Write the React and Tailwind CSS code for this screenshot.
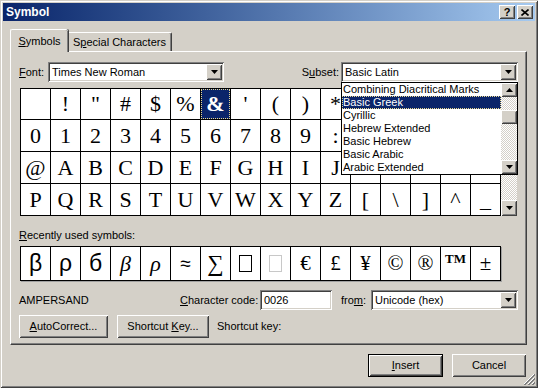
const ui = "font-['Liberation_Sans',Arial,sans-serif] text-[11px] leading-[13px] text-black";
const raised = "shadow-[inset_1px_1px_#ffffff,inset_-1px_-1px_#404040,inset_2px_2px_#d4d0c8,inset_-2px_-2px_#808080]";
const sunken = "shadow-[inset_1px_1px_#808080,inset_-1px_-1px_#ffffff,inset_2px_2px_#404040,inset_-2px_-2px_#d4d0c8]";
const checker = "bg-[repeating-conic-gradient(#ffffff_0_25%,#d4d0c8_0_50%)] bg-[length:2px_2px]";

// cells under the open subset list are left blank, as in the screenshot
const rows = [
  [' ', '!', '"', '#', '$', '%', '&', "'", '(', ')', '*', '', '', '', '', ''],
  ['0', '1', '2', '3', '4', '5', '6', '7', '8', '9', ':', '', '', '', '', ''],
  ['@', 'A', 'B', 'C', 'D', 'E', 'F', 'G', 'H', 'I', 'J', '', '', '', '', ''],
  'PQRSTUVWXYZ[\\]^_'.split(''),
];
const rowH = ['h-[31px]', 'h-[32px]', 'h-[32px]', 'h-[32px]'];

const subsets = [
  'Combining Diacritical Marks',
  'Basic Greek',
  'Cyrillic',
  'Hebrew Extended',
  'Basic Hebrew',
  'Basic Arabic',
  'Arabic Extended',
];

const sans = "font-['Liberation_Sans',Arial,sans-serif]";
const serif = "font-['Liberation_Serif','Times_New_Roman',serif]";

const Tri = ({ up }) => (
  <svg width="7" height="4" viewBox="0 0 7 4" className={up ? 'rotate-180' : ''}>
    <path d="M0 0h7L3.5 4z" fill="#000" />
  </svg>
);

const ArrowBtn = ({ up, className = '' }) => (
  <div className={`w-[16px] bg-[#d4d0c8] flex items-center justify-center ${raised} ${className}`}>
    <Tri up={up} />
  </div>
);

const Combo = ({ value, className = '', children }) => (
  <div className={`relative h-[20px] bg-white flex items-center p-[2px] ${sunken} ${className}`}>
    <span className="flex-1 pl-[2px] whitespace-nowrap">{value}</span>
    <ArrowBtn className="h-[16px]" />
    {children}
  </div>
);

const Button = ({ children, className = '', def }) => (
  <div className={`h-[23px] flex items-center justify-center ${def ? 'border border-black' : ''} ${className}`}>
    <div className={`w-full h-full bg-[#d4d0c8] flex items-center justify-center ${raised}`}>{children}</div>
  </div>
);

const U = ({ children }) => <span className="underline underline-offset-[1px]">{children}</span>;

const Box = ({ gray }) => (
  <div className={`w-[13px] h-[17px] border ${gray ? 'border-[#c8c8c8]' : 'border-black'}`} />
);

const recent = [
  { c: 'β', cls: `${sans} text-[23px]` },
  { c: 'ρ', cls: `${sans} text-[23px]` },
  { c: 'б', cls: `${sans} text-[23px]` },
  { c: 'β', cls: `${serif} italic text-[22px]` },
  { c: 'ρ', cls: `${serif} italic text-[22px]` },
  { c: '≈', cls: `${sans} text-[19px]` },
  { c: '∑', cls: `${serif} text-[23px] font-light` },
  { box: 'black' },
  { box: 'gray' },
  { c: '€', cls: `${serif} text-[21px]` },
  { c: '£', cls: `${serif} text-[21px]` },
  { c: '¥', cls: `${serif} text-[21px]` },
  { c: '©', cls: `${serif} text-[21px]` },
  { c: '®', cls: `${serif} text-[21px]` },
  { c: 'TM', cls: `${serif} font-bold text-[13px] self-start mt-[5px]` },
  { c: '±', cls: `${serif} text-[21px]` },
];

export default function App() {
  return (
    <div className={`relative w-[538px] h-[388px] bg-[#d4d0c8] p-[3px] overflow-hidden shadow-[inset_1px_1px_#d4d0c8,inset_-1px_-1px_#404040,inset_2px_2px_#ffffff,inset_-2px_-2px_#808080] ${ui}`}>
      {/* title bar */}
      <div className="h-[18px] flex items-center bg-gradient-to-r from-[#0a246a] to-[#a6caf0] pl-[3px] pr-[2px]">
        <span className="flex-1 text-white font-bold text-[12px]">Symbol</span>
        <div className="flex gap-[2px]">
          <div className={`w-[16px] h-[14px] bg-[#d4d0c8] flex items-center justify-center font-bold text-[11px] leading-none ${raised}`}>?</div>
          <div className={`w-[16px] h-[14px] bg-[#d4d0c8] flex items-center justify-center ${raised}`}>
            <svg width="8" height="7" viewBox="0 0 8 7">
              <path d="M0.5 0.5l7 6M7.5 0.5l-7 6" stroke="#000" strokeWidth="1.6" />
            </svg>
          </div>
        </div>
      </div>

      <div className="pl-[7px] pr-[8px]">
        {/* tabs */}
        <div className="mt-[8px] flex items-end h-[22px]">
          <div className="relative z-10 -mb-px h-[23px] w-[58px] bg-[#d4d0c8] border-l border-t border-white rounded-tl-[2px] rounded-tr-[2px] shadow-[inset_-1px_0_#808080,1px_0_#404040] flex items-center justify-center">
            <span><U>S</U>ymbols</span>
          </div>
          <div className="h-[19px] w-[104px] border-t border-white border-r border-r-[#404040] shadow-[inset_-1px_0_#808080] rounded-tr-[2px] flex items-center justify-center">
            <span>S<U>p</U>ecial Characters</span>
          </div>
        </div>

        {/* panel */}
        <div className="h-[294px] border-l border-t border-white border-r border-b border-r-[#404040] border-b-[#404040] shadow-[inset_-1px_-1px_#808080] pt-[10px] pl-[8px] pr-[8px]">
          {/* font row */}
          <div className="flex items-center">
            <span className="w-[29px]"><U>F</U>ont:</span>
            <Combo value="Times New Roman" className="w-[176px]" />
            <div className="flex-1" />
            <span className="mr-[2px]">S<U>u</U>bset:</span>
            <Combo value="Basic Latin" className="w-[177px]">
              {/* open list */}
              <div className="absolute left-0 top-full w-[177px] h-[93px] z-20 bg-white border border-black flex">
                <div className="flex-1 flex flex-col">
                  {subsets.map((s) => (
                    <div
                      key={s}
                      className={`h-[13px] pl-[1px] whitespace-nowrap overflow-hidden ${
                        s === 'Basic Greek' ? 'bg-[#0a246a] text-white outline-1 outline-dotted outline-[#e8d890] -outline-offset-1' : ''
                      }`}
                    >
                      {s}
                    </div>
                  ))}
                </div>
                <div className={`w-[16px] flex flex-col ${checker}`}>
                  <ArrowBtn up className="h-[14px]" />
                  <div className="h-[13px]" />
                  <div className={`h-[14px] bg-[#d4d0c8] ${raised}`} />
                  <div className="flex-1" />
                  <ArrowBtn className="h-[14px]" />
                </div>
              </div>
            </Combo>
          </div>

          {/* character grid */}
          <div className="mt-[6px] ml-px flex">
            <div className="border-l border-t border-black">
              {rows.map((r, ri) => (
                <div key={ri} className={`flex ${rowH[ri]}`}>
                  {r.map((ch, ci) => {
                    const sel = ri === 0 && ci === 6;
                    return (
                      <div
                        key={ci}
                        className={`w-[30px] h-full border-r border-b border-black flex items-center justify-center ${serif} text-[22px] leading-none ${
                          sel ? 'bg-[#0a246a] text-white' : 'bg-white'
                        }`}
                      >
                        {sel ? (
                          <div className="w-full h-full outline-1 outline-dotted outline-[#e8d890] -outline-offset-1 flex items-center justify-center font-bold">
                            {ch}
                          </div>
                        ) : (
                          ch
                        )}
                      </div>
                    );
                  })}
                </div>
              ))}
            </div>
            <div className={`w-[16px] flex flex-col ${checker}`}>
              <ArrowBtn up className="h-[16px]" />
              <div className={`h-[16px] bg-[#d4d0c8] ${raised}`} />
              <div className="flex-1" />
              <ArrowBtn className="h-[16px]" />
            </div>
          </div>

          {/* recently used */}
          <div className="mt-[13px]">
            <U>R</U>ecently used symbols:
          </div>
          <div className="mt-[4px] ml-px flex w-fit h-[35px] border-l border-t border-b border-black bg-white shadow-[1px_1px_0_#a0a0a0]">
            {recent.map((r, i) => (
              <div key={i} className="w-[30px] h-full border-r border-black flex items-center justify-center leading-none">
                {r.box ? <Box gray={r.box === 'gray'} /> : <span className={r.cls}>{r.c}</span>}
              </div>
            ))}
          </div>

          {/* character info row */}
          <div className="mt-[9px] flex items-center h-[20px]">
            <span className="w-[161px]">AMPERSAND</span>
            <span className="w-[80px]"><U>C</U>haracter code:</span>
            <div className={`w-[72px] h-[20px] bg-white flex items-center pl-[4px] ${sunken}`}>0026</div>
            <span className="ml-[9px] w-[30px]">fro<U>m</U>:</span>
            <Combo value="Unicode (hex)" className="w-[147px]" />
          </div>

          {/* buttons row */}
          <div className="mt-[5px] flex items-center">
            <Button className="w-[89px]"><span><U>A</U>utoCorrect...</span></Button>
            <Button className="w-[92px] ml-[9px]"><span>Shortcut <U>K</U>ey...</span></Button>
            <span className="ml-[8px]">Shortcut key:</span>
          </div>
        </div>

        {/* dialog buttons */}
        <div className="mt-[9px] flex justify-end gap-[9px] pr-[1px]">
          <Button def className="w-[75px]"><span><U>I</U>nsert</span></Button>
          <Button className="w-[74px]"><span>Cancel</span></Button>
        </div>
      </div>

      {/* resize grip */}
      <svg className="absolute right-[3px] bottom-[3px]" width="12" height="12" viewBox="0 0 12 12">
        <path d="M11 1L1 11M11 5L5 11M11 9L9 11" stroke="#ffffff" strokeWidth="1" />
        <path d="M12 1L1 12M12 2L2 12M12 5L5 12M12 6L6 12M12 9L9 12M12 10L10 12" stroke="#808080" strokeWidth="1" />
      </svg>
    </div>
  );
}
